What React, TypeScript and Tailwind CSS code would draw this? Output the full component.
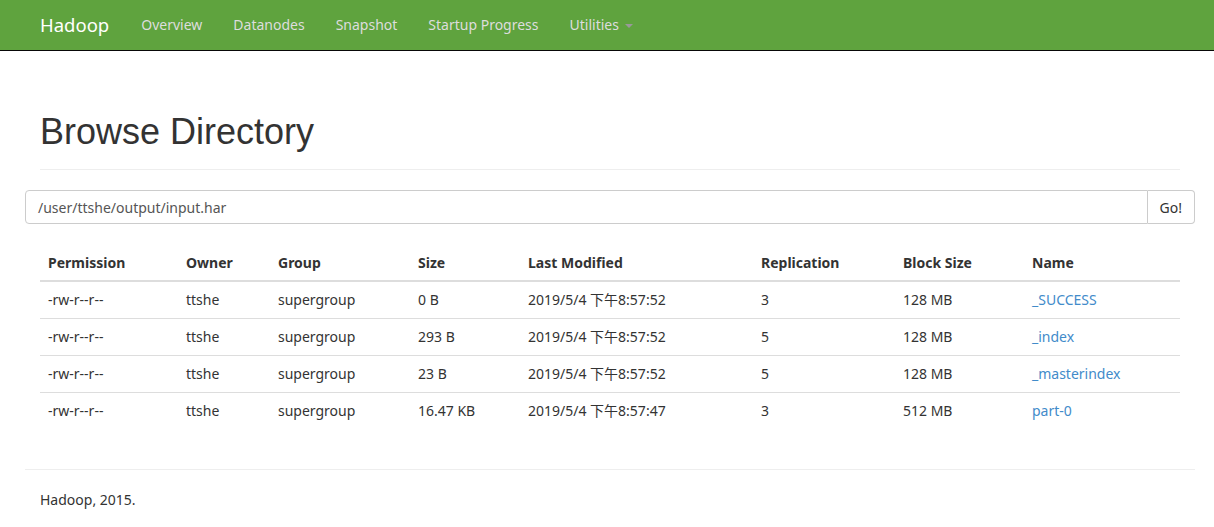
import React from 'react';

const rows = [
  { perm: '-rw-r--r--', owner: 'ttshe', group: 'supergroup', size: '0 B', mod: '2019/5/4 下午8:57:52', rep: '3', block: '128 MB', name: '_SUCCESS' },
  { perm: '-rw-r--r--', owner: 'ttshe', group: 'supergroup', size: '293 B', mod: '2019/5/4 下午8:57:52', rep: '5', block: '128 MB', name: '_index' },
  { perm: '-rw-r--r--', owner: 'ttshe', group: 'supergroup', size: '23 B', mod: '2019/5/4 下午8:57:52', rep: '5', block: '128 MB', name: '_masterindex' },
  { perm: '-rw-r--r--', owner: 'ttshe', group: 'supergroup', size: '16.47 KB', mod: '2019/5/4 下午8:57:47', rep: '3', block: '512 MB', name: 'part-0' },
];

const headers = ['Permission', 'Owner', 'Group', 'Size', 'Last Modified', 'Replication', 'Block Size', 'Name'];
const widths = ['w-[138px]', 'w-[92px]', 'w-[140px]', 'w-[110px]', 'w-[233px]', 'w-[142px]', 'w-[129px]', 'w-[156px]'];

const navItems = ['Overview', 'Datanodes', 'Snapshot', 'Startup Progress'];

export default function App() {
  return (
    <div className="min-h-screen bg-white text-[14px] text-[#333] font-['Noto_Sans','Noto_Sans_CJK_SC',sans-serif]">
      {/* Navbar */}
      <div className="h-[51px] bg-[#5fa33e] border-b border-[#080808]">
        <div className="flex h-[50px] items-center px-[40px]">
          <span className="text-[18.5px] text-white mr-[32px]">Hadoop</span>
          <nav className="flex items-center gap-[1px] text-[#ddd]">
            {navItems.map((n) => (
              <a key={n} className="px-[15px] first:pl-0 leading-[20px]" href="#">
                {n}
              </a>
            ))}
            <a className="flex items-center px-[15px] leading-[20px]" href="#">
              Utilities
              <span className="ml-[6px] mt-[2px] h-0 w-0 border-x-[4px] border-t-[4px] border-x-transparent border-t-[#999]" />
            </a>
          </nav>
        </div>
      </div>

      <div className="pl-[25px] pr-[19px]">
        {/* Page header */}
        <div className="mx-[15px] mt-[61px] pb-[17px] border-b border-[#eee]">
          <h1 className="text-[36px] leading-[40px] font-['Liberation_Sans',sans-serif] text-[#333]">Browse Directory</h1>
        </div>

        {/* Path input */}
        <div className="mt-[20px] flex h-[34px]">
          <div className="flex flex-1 items-center rounded-l-[4px] border border-[#ccc] px-[12px] text-[#555]">
            /user/ttshe/output/input.har
          </div>
          <button className="rounded-r-[4px] border border-l-0 border-[#ccc] bg-white px-[12px] text-[#333]">Go!</button>
        </div>

        {/* Table */}
        <div className="mx-[15px] mt-[20px]">
          <table className="w-full border-collapse table-fixed">
            <thead>
              <tr className="border-b-2 border-[#ddd]">
                {headers.map((h, i) => (
                  <th key={h} className={`${widths[i]} h-[37px] px-[8px] text-left font-bold align-bottom pb-[7px]`}>
                    {h}
                  </th>
                ))}
              </tr>
            </thead>
            <tbody>
              {rows.map((r, idx) => (
                <tr key={r.name} className={idx < rows.length - 1 ? 'border-b border-[#ddd]' : ''}>
                  <td className="h-[37px] px-[8px]">{r.perm}</td>
                  <td className="px-[8px]">{r.owner}</td>
                  <td className="px-[8px]">{r.group}</td>
                  <td className="px-[8px]">{r.size}</td>
                  <td className="px-[8px]">{r.mod}</td>
                  <td className="px-[8px]">{r.rep}</td>
                  <td className="px-[8px]">{r.block}</td>
                  <td className="px-[8px]">
                    <a href="#" className="text-[#428bca]">{r.name}</a>
                  </td>
                </tr>
              ))}
            </tbody>
          </table>
        </div>

        {/* Footer */}
        <div className="mt-[40px] border-t border-[#eee] pt-[19px] px-[15px]">
          <p>Hadoop, 2015.</p>
        </div>
      </div>
    </div>
  );
}
